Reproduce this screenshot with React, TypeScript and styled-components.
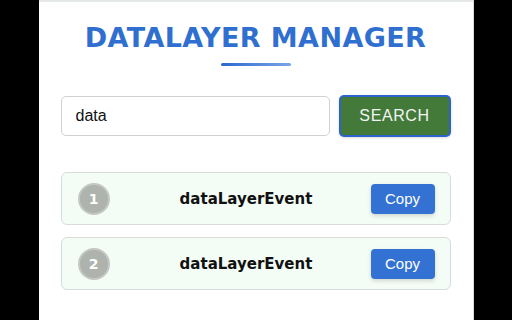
import React, { useState } from 'react';
import styled, { createGlobalStyle } from 'styled-components';

const GlobalStyle = createGlobalStyle`
  html, body {
    margin: 0;
    padding: 0;
    background: #000;
    height: 100%;
  }
  #root {
    height: 100%;
  }
  * {
    box-sizing: border-box;
  }
`;

const Page = styled.div`
  display: flex;
  justify-content: center;
  height: 320px;
  overflow: hidden;
`;

const Panel = styled.div`
  width: 435px;
  height: 100%;
  background: #fff;
  border-top: 2px solid #e4e8e8;
  border-right: 1px solid #d8dcdc;
  padding: 19px 22px 0;
  display: flex;
  flex-direction: column;
`;

const Title = styled.h1`
  margin: 0;
  text-align: center;
  font-family: 'DejaVu Sans', Verdana, sans-serif;
  font-weight: bold;
  font-size: 27px;
  letter-spacing: 0.4px;
  color: #2f6fd0;
  line-height: 34px;
`;

const Underline = styled.div`
  width: 70px;
  height: 3px;
  border-radius: 2px;
  margin: 8px auto 0;
  background: linear-gradient(90deg, #2a68cf, #7aa6e6);
`;

const SearchRow = styled.div`
  display: flex;
  align-items: center;
  gap: 9px;
  margin-top: 29px;
`;

const Input = styled.input`
  flex: 1;
  height: 40px;
  border: 1px solid #cfd2d4;
  border-radius: 5px;
  padding: 0 14px;
  font-family: 'Liberation Sans', Arial, sans-serif;
  font-size: 16px;
  color: #111;
  outline: none;
`;

const SearchButton = styled.button`
  width: 112px;
  height: 42px;
  background: #437a3a;
  border: 2px solid #2d63cf;
  border-radius: 5px;
  color: #f2f4f2;
  font-family: 'Liberation Sans', Arial, sans-serif;
  font-size: 16px;
  letter-spacing: 0.6px;
  box-shadow: 0 1px 3px rgba(0, 0, 0, 0.15);
`;

const List = styled.div`
  display: flex;
  flex-direction: column;
  gap: 12px;
  margin-top: 35px;
`;

const Card = styled.div`
  display: flex;
  align-items: center;
  height: 53px;
  padding: 0 15px 0 16px;
  background: #f3fcf5;
  border: 1px solid #d9dcdb;
  border-radius: 6px;
`;

const Badge = styled.div`
  width: 32px;
  height: 32px;
  border-radius: 50%;
  background: #aeb3ae;
  border: 2px solid #c4c8c4;
  color: #fff;
  font-family: 'DejaVu Sans', Verdana, sans-serif;
  font-weight: bold;
  font-size: 14px;
  display: flex;
  align-items: center;
  justify-content: center;
`;

const EventName = styled.div`
  flex: 1;
  text-align: center;
  padding-left: 12px;
  font-family: 'DejaVu Sans', Verdana, sans-serif;
  font-weight: bold;
  font-size: 15px;
  color: #111;
`;

const CopyButton = styled.button`
  width: 64px;
  height: 30px;
  background: #3372d3;
  border: none;
  border-radius: 4px;
  color: #fff;
  font-family: 'Liberation Sans', Arial, sans-serif;
  font-size: 15px;
  box-shadow: 0 2px 4px rgba(0, 0, 0, 0.15);
`;

const events = ['dataLayerEvent', 'dataLayerEvent'];

const App: React.FC = () => {
  const [query, setQuery] = useState('data');

  return (
    <>
      <GlobalStyle />
      <Page>
        <Panel>
          <Title>DATALAYER MANAGER</Title>
          <Underline />
          <SearchRow>
            <Input value={query} onChange={(e) => setQuery(e.target.value)} />
            <SearchButton>SEARCH</SearchButton>
          </SearchRow>
          <List>
            {events.map((name, i) => (
              <Card key={i}>
                <Badge>{i + 1}</Badge>
                <EventName>{name}</EventName>
                <CopyButton>Copy</CopyButton>
              </Card>
            ))}
          </List>
        </Panel>
      </Page>
    </>
  );
};

export default App;
